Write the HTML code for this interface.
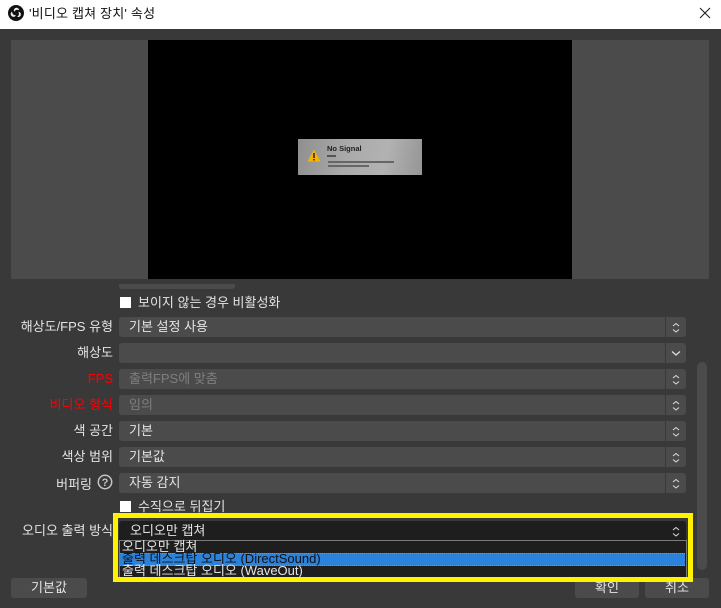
<!DOCTYPE html>
<html><head><meta charset="utf-8">
<style>
html,body{margin:0;padding:0}
body{width:721px;height:608px;overflow:hidden;background:#3a393a;position:relative;font-family:"Liberation Sans","Noto Sans CJK KR",sans-serif;font-size:13px;color:#e4e4e4}
.a{position:absolute}
.t{position:absolute;white-space:pre;line-height:20px;height:20px}
.lab{position:absolute;right:608px;white-space:pre;line-height:20px;height:20px;text-align:right}
.combo{position:absolute;left:119px;width:567px;height:20px;background:#4c4b4c;border-radius:3px}
.combo .txt{position:absolute;left:10px;top:0;line-height:20px;white-space:pre}
.combo .sep{position:absolute;left:546px;top:0;width:1px;height:20px;background:#3a393a}
.combo svg{position:absolute;left:547px;top:0}
.dis{color:#7f7e7f}
.btn{position:absolute;top:578px;height:20px;background:#4c4b4c;border-radius:3px;text-align:center;line-height:20px}
.cb{position:absolute;left:120px;width:11px;height:11px;background:#fff}
</style></head><body>
<div class="a" style="left:0;top:0;width:721px;height:29px;background:#fff"></div>
<svg class="a" style="left:8px;top:5px" width="16" height="16" viewBox="0 0 16 16"><circle cx="8" cy="8" r="8" fill="#111"/><path d="M8.500 2.800a2.700 2.700 0 0 1 2.700 2.500a3.300 3.300 0 0 0-5 1.600a2.700 2.700 0 0 1 2.300-4.100zM3 10.300a2.700 2.700 0 0 1 1.100-3.700a3.300 3.300 0 0 0 3.800 3.600a2.700 2.700 0 0 1-4.900 .1zM12.700 10.500a2.700 2.700 0 0 1-3.600 1.200a3.300 3.300 0 0 0 1.200-5a2.700 2.700 0 0 1 2.400 3.800z" fill="#f0f0f0"/></svg>
<div class="t" style="left:29px;top:3px;color:#111;font-size:13px;line-height:22px;letter-spacing:.2px">'비디오 캡쳐 장치' 속성</div>
<svg class="a" style="left:699px;top:7px" width="12" height="12" viewBox="0 0 12 12"><path d="M1 1L11 11M11 1L1 11" stroke="#222" stroke-width="1.100"/></svg>

<div class="a" style="left:11px;top:40px;width:698px;height:239px;background:#4c4b4c"></div>
<div class="a" style="left:148px;top:40px;width:424px;height:239px;background:#000"></div>
<div class="a" style="left:298px;top:139px;width:124px;height:36px;background:linear-gradient(100deg,#8f8f8f,#aaa 40%,#b2b2b2 70%,#959595)"></div>
<svg class="a" style="left:307px;top:149px" width="14" height="13" viewBox="0 0 14 13"><path d="M7 .5L13.500 12.500H.5z" fill="#f6b400"/><path d="M7 4v5M7 10v1.500" stroke="#222" stroke-width="1.500"/></svg>
<div class="t" style="left:327px;top:139px;font-size:7.500px;color:#222;font-weight:bold">No Signal</div>
<div class="a" style="left:327px;top:155px;width:9px;height:2px;background:#555"></div>
<div class="a" style="left:328px;top:161px;width:66px;height:1.500px;background:#666"></div>
<div class="a" style="left:328px;top:165px;width:41px;height:1.500px;background:#666"></div>

<div class="a" style="left:119px;top:284px;width:116px;height:5px;background:#4c4b4c;border-radius:0 0 3px 3px"></div>

<div class="cb" style="top:297px"></div>
<div class="t" style="left:138px;top:293px">보이지 않는 경우 비활성화</div>

<div class="lab" style="top:317px">해상도/FPS 유형</div>
<div class="combo" style="top:317px"><span class="txt">기본 설정 사용</span><i class="sep"></i><svg width="20" height="20"><path d="M7 9L10 6.500L13 9M7 12.500L10 15L13 12.500" fill="none" stroke="#ddd" stroke-width="1"/></svg></div>

<div class="lab" style="top:343px">해상도</div>
<div class="combo" style="top:343px"><i class="sep"></i><svg width="20" height="20"><path d="M6 8.500L10 12L14 8.500" fill="none" stroke="#ddd" stroke-width="1.300"/></svg></div>

<div class="lab" style="top:369px;color:#f00">FPS</div>
<div class="combo dis" style="top:369px"><span class="txt">출력FPS에 맞춤</span><i class="sep"></i><svg width="20" height="20"><path d="M7 9L10 6.500L13 9M7 12.500L10 15L13 12.500" fill="none" stroke="#ddd" stroke-width="1"/></svg></div>

<div class="lab" style="top:395px;color:#f00">비디오 형식</div>
<div class="combo dis" style="top:395px"><span class="txt">임의</span><i class="sep"></i><svg width="20" height="20"><path d="M7 9L10 6.500L13 9M7 12.500L10 15L13 12.500" fill="none" stroke="#ddd" stroke-width="1"/></svg></div>

<div class="lab" style="top:421px">색 공간</div>
<div class="combo" style="top:421px"><span class="txt">기본</span><i class="sep"></i><svg width="20" height="20"><path d="M7 9L10 6.500L13 9M7 12.500L10 15L13 12.500" fill="none" stroke="#ddd" stroke-width="1"/></svg></div>

<div class="lab" style="top:447px">색상 범위</div>
<div class="combo" style="top:447px"><span class="txt">기본값</span><i class="sep"></i><svg width="20" height="20"><path d="M7 9L10 6.500L13 9M7 12.500L10 15L13 12.500" fill="none" stroke="#ddd" stroke-width="1"/></svg></div>

<div class="lab" style="top:475px;right:629px">버퍼링</div>
<svg class="a" style="left:97px;top:474px" width="16" height="16" viewBox="0 0 16 16"><circle cx="8" cy="8" r="6.700" fill="none" stroke="#c4c4c4" stroke-width="1.500"/><text x="8" y="12" font-size="11" font-weight="bold" text-anchor="middle" fill="#c4c4c4" font-family="Liberation Sans">?</text></svg>
<div class="combo" style="top:473px"><span class="txt">자동 감지</span><i class="sep"></i><svg width="20" height="20"><path d="M7 9L10 6.500L13 9M7 12.500L10 15L13 12.500" fill="none" stroke="#ddd" stroke-width="1"/></svg></div>

<div class="cb" style="top:501px"></div>
<div class="t" style="left:138px;top:497px">수직으로 뒤집기</div>

<div class="a" style="left:697px;top:362px;width:10px;height:208px;background:#4c4b4c;border-radius:5px"></div>

<div class="lab" style="top:521px">오디오 출력 방식</div>
<div class="btn" style="left:11px;width:76px">기본값</div>
<div class="btn" style="left:575px;width:64px">확인</div>
<div class="btn" style="left:645px;width:64px">취소</div>

<div class="a" style="left:119px;top:521px;width:567px;height:20px;background:#1e1e1e;border-radius:3px 3px 0 0"><span class="t" style="left:11px;top:0">오디오만 캡쳐</span><svg class="a" style="left:547px;top:0" width="20" height="20"><path d="M7 9L10 6.500L13 9M7 12.500L10 15L13 12.500" fill="none" stroke="#ddd" stroke-width="1"/></svg></div>
<div class="a" style="left:119px;top:540px;width:566px;height:37px;background:#1e1e1e;border:1px solid #7a7a7a;border-bottom:0"></div>
<div class="a" style="left:120px;top:553px;width:565px;height:11px;background:#2b82da;border-top:1px dotted #d2803a;border-bottom:1px dotted #d2803a"></div>
<div class="t" style="left:122px;top:537px;line-height:20px">오디오만 캡쳐</div>
<div class="t" style="left:122px;top:549px;color:#111;line-height:20px">출력 데스크탑 오디오 (DirectSound)</div>
<div class="t" style="left:122px;top:561px;line-height:20px">출력 데스크탑 오디오 (WaveOut)</div>

<div class="a" style="left:113px;top:513px;width:570px;height:59px;border:5px solid #fff200;pointer-events:none"></div>
</body></html>
